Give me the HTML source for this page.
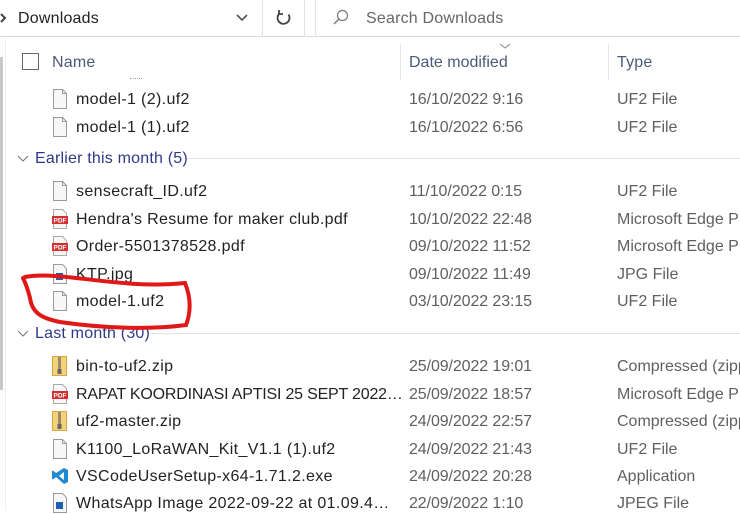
<!DOCTYPE html>
<html><head><meta charset="utf-8"><style>
*{margin:0;padding:0;box-sizing:border-box}
body{width:740px;height:510px;overflow:hidden;background:#fff;font-family:"Segoe UI","Liberation Sans",sans-serif;position:relative;color:#1f1f1f}
.a{position:absolute;white-space:nowrap}
.t{font-size:16px;line-height:20px;letter-spacing:0.2px;margin-top:2px}
.n{left:76px;color:#222;max-width:316px;overflow:hidden;text-overflow:ellipsis;letter-spacing:0.35px}
.d{left:409px;color:#5f5f5f;letter-spacing:-0.1px}
.y{left:617px;color:#5f5f5f;letter-spacing:0}
.g{left:35px;color:#2f3a87}
.ic{position:absolute;left:52px;width:16px;height:20px;margin-top:1px}
</style></head><body>
<div class="a" style="left:0;top:0;width:740px;height:37px;border-bottom:1px solid #d9d9d9"></div>
<div class="a" style="left:262px;top:0;width:1px;height:37px;background:#e3e3e3"></div>
<div class="a" style="left:304px;top:0;width:1px;height:37px;background:#e3e3e3"></div>
<div class="a" style="left:315px;top:0;width:1px;height:37px;background:#e3e3e3"></div>
<svg class="a" style="left:0;top:12px" width="10" height="12"><path d="M1 2l4 4-4 4" stroke="#444" stroke-width="2" fill="none"/></svg>
<div class="a t" style="left:18px;top:7px;color:#222">Downloads</div>
<svg class="a" style="left:235px;top:13px" width="14" height="10"><path d="M2 2l5 5 5-5" stroke="#555" stroke-width="1.6" fill="none"/></svg>
<svg class="a" style="left:274px;top:8px" width="20" height="20"><path d="M14.5 6.5A6 6 0 1 1 6 5" stroke="#444" stroke-width="1.8" fill="none"/><path d="M5 2v4h4" stroke="#444" stroke-width="1.8" fill="none"/></svg>
<svg class="a" style="left:331px;top:8px" width="20" height="20"><circle cx="11.5" cy="7.5" r="5" stroke="#777" stroke-width="1.2" fill="none"/><path d="M8 11l-5 5" stroke="#777" stroke-width="1.3"/></svg>
<div class="a t" style="left:366px;top:7px;color:#666">Search Downloads</div>
<div class="a" style="left:0;top:57px;width:3px;height:333px;background:#c8c8c8"></div>
<div class="a" style="left:5px;top:38px;width:1px;height:472px;background:#eee"></div>
<div class="a" style="left:22px;top:53px;width:17px;height:17px;border:1px solid #666"></div>
<div class="a t" style="left:52px;top:51px;color:#4a5a78">Name</div>
<div class="a" style="left:400px;top:44px;width:1px;height:36px;background:#e5e5e5"></div>
<div class="a" style="left:608px;top:44px;width:1px;height:36px;background:#e5e5e5"></div>
<svg class="a" style="left:499px;top:43px" width="12" height="7"><path d="M1 1l5 4 5-4" stroke="#888" stroke-width="1" fill="none"/></svg>
<div class="a t" style="left:409px;top:51px;color:#4a5a78;letter-spacing:0">Date modified</div>
<div class="a t" style="left:617px;top:51px;color:#4a5a78">Type</div>
<div class="a" style="left:130px;top:78px;width:12px;height:2px;border-top:1px dotted #aaa"></div>

<svg class="a" style="left:17px;top:155px" width="12" height="8"><path d="M1 1l5 5 5-5" stroke="#777" stroke-width="1" fill="none"/></svg>
<div class="a t g" style="top:147px">Earlier this month (5)</div>
<div class="a" style="left:187px;top:158px;width:553px;height:1px;background:#e3e3e3"></div>
<svg class="a" style="left:17px;top:330px" width="12" height="8"><path d="M1 1l5 5 5-5" stroke="#777" stroke-width="1" fill="none"/></svg>
<div class="a t g" style="top:322px">Last month (30)</div>
<div class="a" style="left:150px;top:333px;width:590px;height:1px;background:#e3e3e3"></div>

<svg width="0" height="0" style="position:absolute"><defs>
<symbol id="doc" viewBox="0 0 16 20"><path d="M1.5 0.5h9l4 4v15h-13z" fill="#f7f7f7" stroke="#9a9a9a"/><path d="M10.5 0.5v4h4" fill="none" stroke="#9a9a9a"/></symbol>
<symbol id="pdf" viewBox="0 0 16 20"><path d="M1.5 0.5h9l4 4v15h-13z" fill="#f7f7f7" stroke="#aaa"/><rect x="0" y="7" width="16" height="8" fill="#d32f2f"/><text x="8" y="13.5" font-size="6.5" fill="#fff" text-anchor="middle" font-family="Liberation Sans" font-weight="bold">PDF</text></symbol>
<symbol id="img" viewBox="0 0 16 20"><path d="M1.5 0.5h9l4 4v15h-13z" fill="#f7f7f7" stroke="#9a9a9a"/><rect x="4" y="9" width="7" height="7" fill="#1d5fb3"/></symbol>
<symbol id="zip" viewBox="0 0 16 20"><rect x="0.5" y="0.5" width="14" height="19" fill="#f3d27a" stroke="#d4a943"/><rect x="6" y="1" width="3" height="14" fill="#9b8b6b"/><rect x="5.5" y="13" width="4" height="5" fill="#666"/></symbol>
<symbol id="vs" viewBox="0 0 16 20"><path d="M12 2l4 2v12l-4 2-8-7-3 2.5-1-1v-7l1-1 3 2.5z" fill="#1f8ad2"/><path d="M12 6v8l-5-4z" fill="#fff"/></symbol>
</defs></svg>

<svg class="ic" style="top:88px"><use href="#doc"/></svg><div class="a t n" style="top:88px">model-1 (2).uf2</div><div class="a t d" style="top:88px">16/10/2022 9:16</div><div class="a t y" style="top:88px">UF2 File</div>
<svg class="ic" style="top:116px"><use href="#doc"/></svg><div class="a t n" style="top:116px">model-1 (1).uf2</div><div class="a t d" style="top:116px">16/10/2022 6:56</div><div class="a t y" style="top:116px">UF2 File</div>

<svg class="ic" style="top:180px"><use href="#doc"/></svg><div class="a t n" style="top:180px">sensecraft_ID.uf2</div><div class="a t d" style="top:180px">11/10/2022 0:15</div><div class="a t y" style="top:180px">UF2 File</div>
<svg class="ic" style="top:208px"><use href="#pdf"/></svg><div class="a t n" style="top:208px">Hendra's Resume for maker club.pdf</div><div class="a t d" style="top:208px">10/10/2022 22:48</div><div class="a t y" style="top:208px">Microsoft Edge PDF</div>
<svg class="ic" style="top:235px"><use href="#pdf"/></svg><div class="a t n" style="top:235px">Order-5501378528.pdf</div><div class="a t d" style="top:235px">09/10/2022 11:52</div><div class="a t y" style="top:235px">Microsoft Edge PDF</div>
<svg class="ic" style="top:263px"><use href="#img"/></svg><div class="a t n" style="top:263px">KTP.jpg</div><div class="a t d" style="top:263px">09/10/2022 11:49</div><div class="a t y" style="top:263px">JPG File</div>
<svg class="ic" style="top:290px"><use href="#doc"/></svg><div class="a t n" style="top:290px">model-1.uf2</div><div class="a t d" style="top:290px">03/10/2022 23:15</div><div class="a t y" style="top:290px">UF2 File</div>

<svg class="ic" style="top:355px"><use href="#zip"/></svg><div class="a t n" style="top:355px">bin-to-uf2.zip</div><div class="a t d" style="top:355px">25/09/2022 19:01</div><div class="a t y" style="top:355px">Compressed (zipped)</div>
<svg class="ic" style="top:383px"><use href="#pdf"/></svg><div class="a t n" style="top:383px;letter-spacing:-0.2px;max-width:330px">RAPAT KOORDINASI APTISI 25 SEPT 2022.pdf</div><div class="a t d" style="top:383px">25/09/2022 18:57</div><div class="a t y" style="top:383px">Microsoft Edge PDF</div>
<svg class="ic" style="top:410px"><use href="#zip"/></svg><div class="a t n" style="top:410px">uf2-master.zip</div><div class="a t d" style="top:410px">24/09/2022 22:57</div><div class="a t y" style="top:410px">Compressed (zipped)</div>
<svg class="ic" style="top:438px"><use href="#doc"/></svg><div class="a t n" style="top:438px">K1100_LoRaWAN_Kit_V1.1 (1).uf2</div><div class="a t d" style="top:438px">24/09/2022 21:43</div><div class="a t y" style="top:438px">UF2 File</div>
<svg class="ic" style="top:465px"><use href="#vs"/></svg><div class="a t n" style="top:465px">VSCodeUserSetup-x64-1.71.2.exe</div><div class="a t d" style="top:465px">24/09/2022 20:28</div><div class="a t y" style="top:465px">Application</div>
<svg class="ic" style="top:492px"><use href="#img"/></svg><div class="a t n" style="top:492px">WhatsApp Image 2022-09-22 at 01.09.45.jpeg</div><div class="a t d" style="top:492px">22/09/2022 1:10</div><div class="a t y" style="top:492px">JPEG File</div>

<svg class="a" style="left:0;top:0" width="740" height="510"><path d="M25 277C60 270 120 290 185 283C192 300 190 315 186 325C150 330 100 328 60 322C40 318 32 312 30 298C28 290 26 284 23 278" stroke="#e01818" stroke-width="4" fill="none" stroke-linecap="round"/></svg>
</body></html>
